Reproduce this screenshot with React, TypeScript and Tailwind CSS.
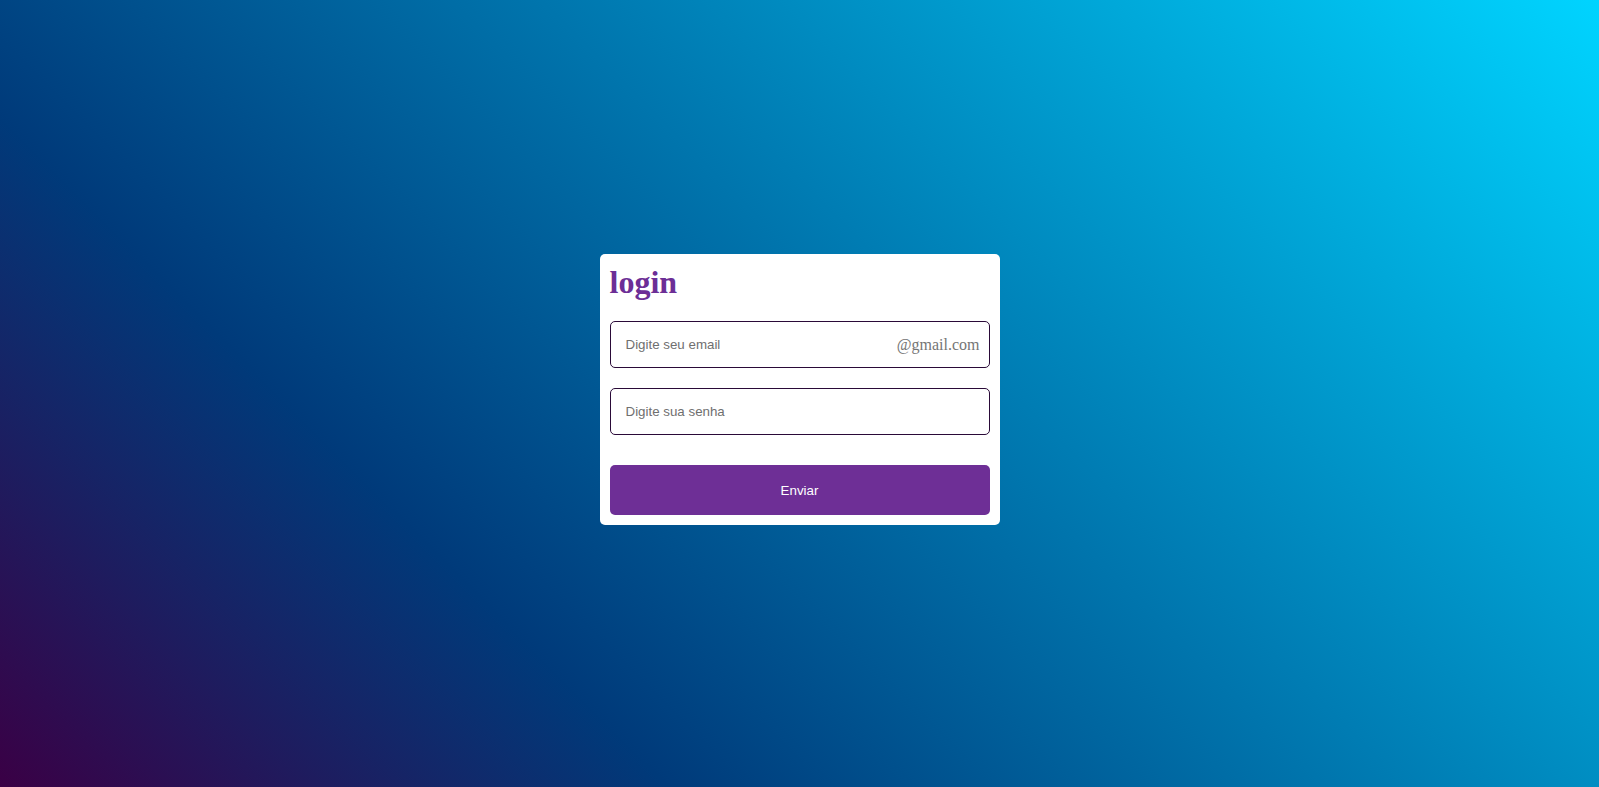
import React from "react";

export default function App() {
  return (
    <div className="min-h-screen w-full bg-[linear-gradient(45deg,#3a0045_0%,#003a7a_28%,#00d4ff_100%)] flex justify-center pt-[254px]">
      <form
        className="w-[400px] h-[271px] bg-white rounded-[5px] p-[10px] flex flex-col"
        onSubmit={(e) => e.preventDefault()}
      >
        <h1 className="font-['Liberation_Serif',serif] font-bold text-[32px] leading-[36px] text-[#6c2e96] mb-[21px]">
          login
        </h1>
        <div className="relative h-[47px]">
          <input
            type="text"
            placeholder="Digite seu email"
            className="w-full h-full border border-[#2a0a38] rounded-[5px] pl-[15px] pr-[100px] font-['Liberation_Sans',Arial,sans-serif] text-[13.333px] text-black placeholder:text-[#6f6f6f] outline-none bg-white"
          />
          <span className="absolute inset-y-0 right-[10px] flex items-center pt-[1px] font-['Liberation_Serif',serif] text-[16px] text-[#757575] pointer-events-none">
            @gmail.com
          </span>
        </div>
        <div className="h-[47px] mt-[20px]">
          <input
            type="password"
            placeholder="Digite sua senha"
            className="w-full h-full border border-[#2a0a38] rounded-[5px] pl-[15px] font-['Liberation_Sans',Arial,sans-serif] text-[13.333px] text-black placeholder:text-[#6f6f6f] outline-none bg-white"
          />
        </div>
        <button
          type="submit"
          className="mt-[30px] h-[50px] w-full rounded-[5px] bg-[#6e2f96] text-white pt-[2px] font-['Liberation_Sans',Arial,sans-serif] text-[13.333px]"
        >
          Enviar
        </button>
      </form>
    </div>
  );
}
